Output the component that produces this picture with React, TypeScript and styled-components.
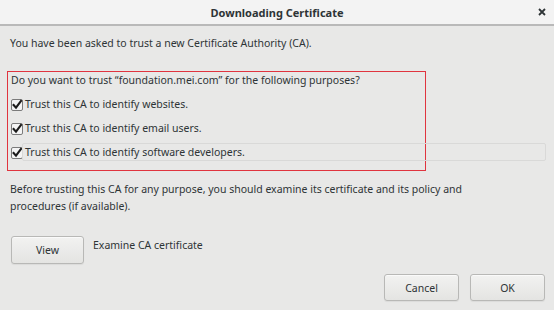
import React from "react";
import styled, { createGlobalStyle } from "styled-components";

const GlobalStyle = createGlobalStyle`
  html, body {
    margin: 0;
    padding: 0;
    background: #e8e8e7;
  }
  body {
    font-family: "Noto Sans", "Open Sans", sans-serif;
    font-size: 10.5px;
    color: #2e3436;
  }
`;

const Dialog = styled.div`
  width: 554px;
  height: 310px;
  background: #e8e8e7;
  display: flex;
  flex-direction: column;
  overflow: hidden;
`;

const TitleBar = styled.div`
  height: 24px;
  flex: none;
  display: flex;
  align-items: center;
  justify-content: center;
  position: relative;
  background: #f3f3f3;
  border-bottom: 2px solid #b9b9b9;
`;

const Title = styled.span`
  font-weight: 700;
  font-size: 11px;
  color: #2e3436;
`;

const CloseIcon = styled.svg`
  position: absolute;
  right: 8px;
  top: 8px;
`;

const Content = styled.div`
  display: flex;
  flex-direction: column;
  padding: 9px 9px 0 10px;
`;

const Text = styled.p`
  margin: 0;
  line-height: 17px;
  white-space: nowrap;
`;

const Highlight = styled.div`
  margin: 19px 0 0 -3px;
  width: 419px;
  height: 100px;
  box-sizing: border-box;
  border: 1px solid #e0343f;
  padding: 0 0 0 3px;
  display: flex;
  flex-direction: column;
`;

const Options = styled.div`
  display: flex;
  flex-direction: column;
  gap: 6px;
  margin-top: 6px;
`;

const OptionRow = styled.label<{ $focused?: boolean }>`
  display: flex;
  align-items: center;
  height: 18px;
  width: ${(p) => (p.$focused ? "535px" : "auto")};
  position: relative;
  &::after {
    content: "";
    display: ${(p) => (p.$focused ? "block" : "none")};
    position: absolute;
    left: 11px;
    top: 0;
    right: 0;
    bottom: 0;
    border: 1px solid #d9d9d8;
    border-radius: 2px;
  }
`;

const CheckBox = styled.svg`
  flex: none;
  margin-right: 1px;
`;

const Paragraph = styled.div`
  margin-top: 10px;
`;

const ExamineRow = styled.div`
  display: flex;
  align-items: flex-start;
  margin-top: 21px;
  margin-left: 1px;
  gap: 9px;
`;

const Button = styled.button<{ $width?: number; $height?: number }>`
  width: ${(p) => p.$width ?? 73}px;
  height: ${(p) => p.$height ?? 28}px;
  box-sizing: border-box;
  border: 1px solid #b8b8b6;
  border-radius: 3px;
  background: linear-gradient(#f2f2f1, #e4e4e2);
  box-shadow: inset 0 1px #fafafa, 0 1px 1px rgba(0, 0, 0, 0.06);
  font-family: "Noto Sans", "Open Sans", sans-serif;
  font-size: 10.5px;
  color: #2e3436;
  padding: 0;
`;

const Label = styled.span`
  line-height: 17px;
  margin-top: 1px;
`;

const Footer = styled.div`
  display: flex;
  justify-content: flex-end;
  gap: 11px;
  padding: 10px 0 0 0;
`;

const Check = () => (
  <CheckBox width="13" height="13" viewBox="0 0 13 13">
    <rect x="0.5" y="1.5" width="11" height="11" rx="1.5" fill="#f4f4f4" stroke="#7b7b7b" />
    <path
      d="M2.6 7 L5 9.6 L10 3"
      fill="none"
      stroke="#1b1b1b"
      strokeWidth="2.1"
      strokeLinecap="square"
      strokeLinejoin="miter"
    />
  </CheckBox>
);

const options = [
  "Trust this CA to identify websites.",
  "Trust this CA to identify email users.",
  "Trust this CA to identify software developers.",
];

const App = () => {
  return (
    <Dialog>
      <GlobalStyle />
      <TitleBar>
        <Title>Downloading Certificate</Title>
        <CloseIcon width="8" height="8" viewBox="0 0 8 8">
          <path d="M1 1 L7 7 M7 1 L1 7" stroke="#2e3436" strokeWidth="1.8" />
        </CloseIcon>
      </TitleBar>
      <Content>
        <Text>You have been asked to trust a new Certificate Authority (CA).</Text>
        <Highlight>
          <Text>Do you want to trust “foundation.mei.com” for the following purposes?</Text>
          <Options>
            {options.map((o, i) => (
              <OptionRow key={o} $focused={i === options.length - 1}>
                <Check />
                {o}
              </OptionRow>
            ))}
          </Options>
        </Highlight>
        <Paragraph>
          <Text>
            Before trusting this CA for any purpose, you should examine its certificate and its policy and
          </Text>
          <Text>procedures (if available).</Text>
        </Paragraph>
        <ExamineRow>
          <Button>View</Button>
          <Label>Examine CA certificate</Label>
        </ExamineRow>
        <Footer>
          <Button $width={75} $height={27}>Cancel</Button>
          <Button $width={75} $height={27}>OK</Button>
        </Footer>
      </Content>
    </Dialog>
  );
};

export default App;
